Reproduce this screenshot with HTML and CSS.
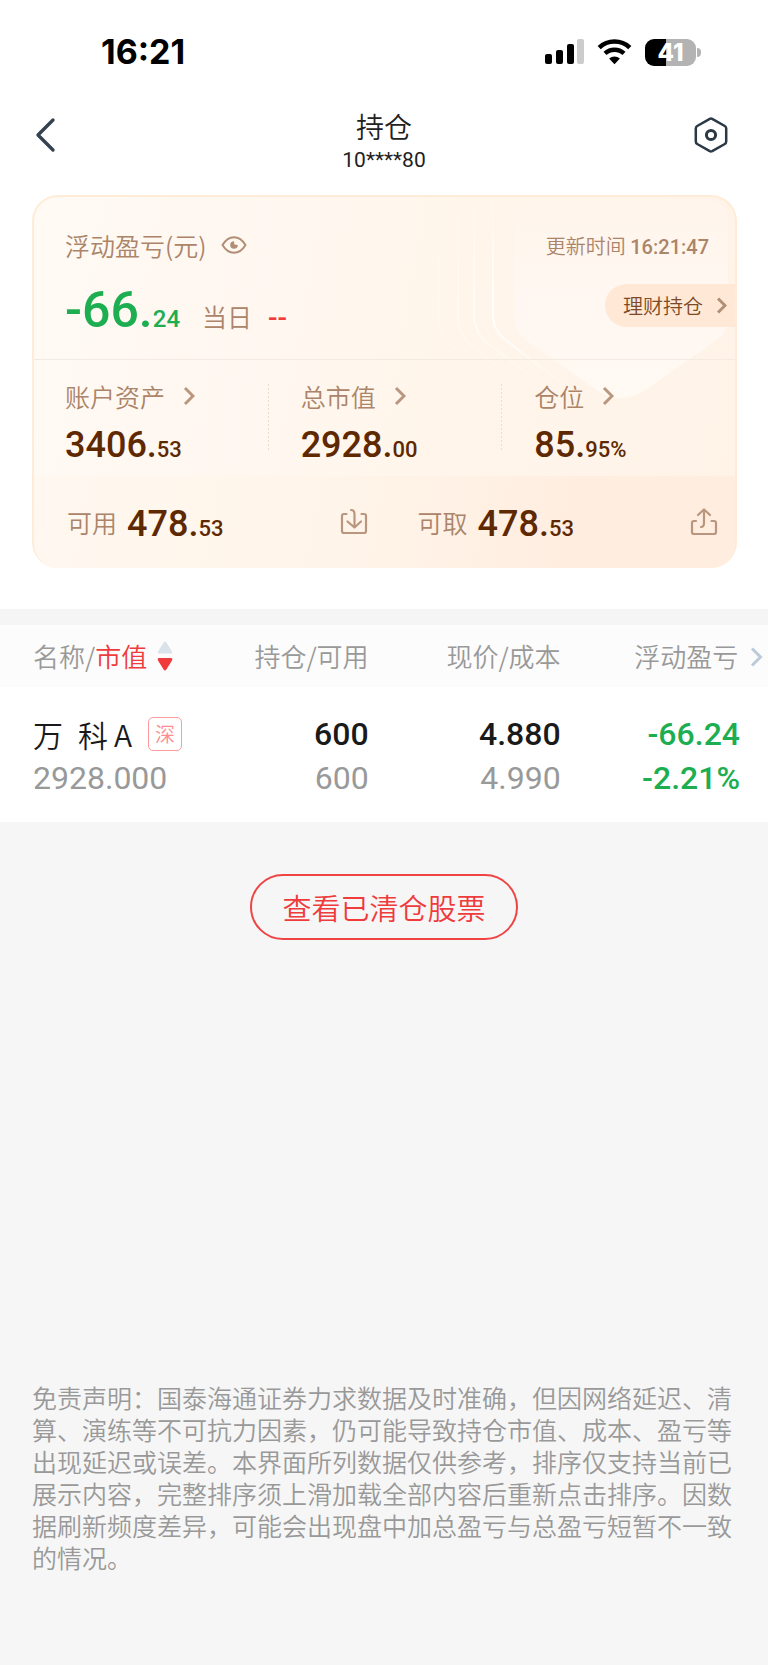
FILE: index.html
```html
<!DOCTYPE html>
<html lang="zh-CN">
<head>
  <meta charset="UTF-8">
  <meta name="viewport" content="width=device-width, initial-scale=1.0">
  <title>持仓</title>
  <link rel="stylesheet" href="styles.css">
</head>
<body>
  <div class="top">
    <div class="status-bar">
      <span class="clock">16:21</span>
      <div class="status-icons">
        <svg width="40" height="26" viewBox="0 0 40 26">
          <rect x="0" y="15" width="7" height="10" rx="2"/>
          <rect x="11" y="11" width="7" height="14" rx="2"/>
          <rect x="22" y="5" width="7" height="20" rx="2"/>
          <rect x="32" y="0" width="7" height="25" rx="2" fill="#ccc"/>
        </svg>
        <svg width="36" height="26" viewBox="0 0 36 26">
          <path d="M2.2 8.6a22.4 22.4 0 0 1 30.6 0" fill="none" stroke="#000" stroke-width="4.6"/>
          <path d="M8 14.4a14 14 0 0 1 19 0" fill="none" stroke="#000" stroke-width="4.4"/>
          <path d="M17.5 25.2l-5.4-5.6a8 8 0 0 1 10.8 0z"/>
        </svg>
        <div class="battery"><span>41</span></div>
      </div>
    </div>

    <header class="nav">
      <button class="icon-btn" aria-label="返回">
        <svg width="36" height="36" viewBox="0 0 36 36" fill="none" stroke="#35424f" stroke-width="3.4" stroke-linecap="round" stroke-linejoin="round"><path d="M21 3L6 18l15 15"/></svg>
      </button>
      <div class="nav-title">
        <h1>持仓</h1>
        <p>10****80</p>
      </div>
      <button class="icon-btn" aria-label="设置">
        <svg width="36" height="36" viewBox="0 0 36 36" fill="none" stroke="#2b3947" stroke-width="2.5" stroke-linejoin="round"><path d="M16.8 1.8q1.2-.6 2.4 0l12.6 7.2q1.4.8 1.4 2.4v13.2q0 1.6-1.4 2.4l-12.6 7.2q-1.2.6-2.4 0l-12.6-7.2q-1.4-.8-1.4-2.4v-13.2q0-1.6 1.4-2.4z"/><circle cx="18" cy="18" r="4.6" stroke-width="3"/></svg>
      </button>
    </header>

    <section class="card">
      <svg class="card-bg" width="320" height="210" viewBox="0 0 320 210" fill="none">
        <defs>
          <linearGradient id="shield" x1="0" y1="0" x2="0" y2="1">
            <stop offset="0" stop-color="#fff5ec"/>
            <stop offset="0.5" stop-color="#fff7f1"/>
            <stop offset="1" stop-color="#fffaf3"/>
          </linearGradient>
          <linearGradient id="line" x1="0" y1="0" x2="0" y2="200" gradientUnits="userSpaceOnUse">
            <stop offset="0" stop-color="#fff" stop-opacity="0.1"/>
            <stop offset="0.6" stop-color="#fff"/>
            <stop offset="1" stop-color="#fff" stop-opacity="0"/>
          </linearGradient>
        </defs>
        <path fill="url(#shield)" d="M99 24Q99 4 119 2H293Q313 4 313 24V122Q313 134 303 142L232 192Q206 210 180 192L109 142Q99 134 99 122z"/>
        <g stroke="url(#line)" stroke-width="2">
          <path d="M78 0V118Q78 132 89 142L160 196"/>
          <path d="M59 0V118Q59 134 70 144L140 198" opacity="0.7"/>
          <path d="M43 0V120Q43 136 54 146L120 200" opacity="0.45"/>
          <path d="M24 0V122Q24 138 36 148L100 200" opacity="0.3"/>
        </g>
      </svg>

      <div class="profit">
        <div class="profit-head">
          <span class="label">浮动盈亏(元)</span>
          <button class="eye" aria-label="隐藏金额">
            <svg width="26" height="20" viewBox="0 0 26 20" fill="none" stroke="#b18e75" stroke-width="2"><path d="M1.5 10C4.5 5 8.5 2.2 13 2.2S21.5 5 24.5 10C21.5 15 17.5 17.8 13 17.8S4.5 15 1.5 10z" stroke-linejoin="round"/><path d="M13 6.2l.4 3.4 3.4.4a3.8 3.8 0 1 1-3.8-3.8z" fill="#b18e75" stroke="none"/></svg>
          </button>
          <span class="update">更新时间 <b>16:21:47</b></span>
        </div>
        <div class="profit-body">
          <span class="profit-num">-66.<small>24</small></span>
          <span class="label">当日</span>
          <span class="dash">--</span>
          <a class="wealth" href="#">理财持仓
            <svg width="10" height="17" viewBox="0 0 10 17" fill="none" stroke="#b18e75" stroke-width="3"><path d="M1 1.5l7 7-7 7"/></svg>
          </a>
        </div>
      </div>

      <div class="stats">
        <a class="stat" href="#">
          <span class="label">账户资产
            <svg class="arrow" viewBox="0 0 12 20"><path d="M2 2l8 8-8 8"/></svg>
          </span>
          <span class="num">3406.<small>53</small></span>
        </a>
        <a class="stat" href="#">
          <span class="label">总市值
            <svg class="arrow" viewBox="0 0 12 20"><path d="M2 2l8 8-8 8"/></svg>
          </span>
          <span class="num">2928.<small>00</small></span>
        </a>
        <a class="stat" href="#">
          <span class="label">仓位
            <svg class="arrow" viewBox="0 0 12 20"><path d="M2 2l8 8-8 8"/></svg>
          </span>
          <span class="num">85.<small>95%</small></span>
        </a>
      </div>

      <div class="funds">
        <div class="fund">
          <span class="label">可用</span>
          <span class="num">478.<small>53</small></span>
          <button class="fund-btn" aria-label="转入">
            <svg width="28" height="28" viewBox="0 0 28 28" fill="none" stroke="#b9967d" stroke-width="2.2" stroke-linecap="round" stroke-linejoin="round"><path d="M6.5 6H4Q2 6 2 8v15q0 2 2 2h20q2 0 2-2V8q0-2-2-2h-2.5M11 2q3.5 0 3.5 4v13M7.5 13.5l7 6 6.5-6"/></svg>
          </button>
        </div>
        <div class="fund">
          <span class="label">可取</span>
          <span class="num">478.<small>53</small></span>
          <button class="fund-btn" aria-label="转出">
            <svg width="28" height="28" viewBox="0 0 28 28" fill="none" stroke="#b9967d" stroke-width="2.2" stroke-linecap="round" stroke-linejoin="round"><path d="M6 13H4q-2 0-2 2v9q0 2 2 2h20q2 0 2-2v-9q0-2-2-2h-2.5M8 7l6-5.5L20 7M14 2v13q0 4-3 4"/></svg>
          </button>
        </div>
      </div>
    </section>
  </div>

  <table class="holdings">
    <thead>
      <tr>
        <th>
          <button class="sort">名称/<em>市值</em>
            <svg width="16" height="30" viewBox="0 0 16 30"><path d="M8 .5q.8 0 1.4 1l5.6 9q1 2-1 2H2q-2 0-1-2l5.6-9q.6-1 1.4-1z" fill="#dae3ea"/><path d="M8 29.5q.8 0 1.4-1l5.600-9q1-2.500-1-2.500H2q-2 0-1 2.500l5.600 9q.6 1 1.400 1z" fill="#ef3b3b"/></svg>
          </button>
        </th>
        <th>持仓/可用</th>
        <th>现价/成本</th>
        <th class="last">浮动盈亏
          <svg class="more" width="13" height="20" viewBox="0 0 13 20"><path d="M2 1.5l8.5 8.5L2 18.5"/></svg>
        </th>
      </tr>
    </thead>
    <tbody>
      <tr>
        <td>
          <div class="stock">万&ensp;科&thinsp;A <span class="tag">深</span></div>
          <div class="sub">2928.000</div>
        </td>
        <td>
          <div class="main">600</div>
          <div class="sub">600</div>
        </td>
        <td>
          <div class="main">4.880</div>
          <div class="sub">4.990</div>
        </td>
        <td class="down">
          <div class="main">-66.24</div>
          <div class="sub">-2.21%</div>
        </td>
      </tr>
    </tbody>
  </table>

  <main class="rest">
    <button class="cleared">查看已清仓股票</button>
    <p class="disclaimer">免责声明：国泰海通证券力求数据及时准确，但因网络延迟、清算、演练等不可抗力因素，仍可能导致持仓市值、成本、盈亏等出现延迟或误差。本界面所列数据仅供参考，排序仅支持当前已展示内容，完整排序须上滑加载全部内容后重新点击排序。因数据刷新频度差异，可能会出现盘中加总盈亏与总盈亏短暂不一致的情况。</p>
  </main>
</body>
</html>
```
FILE: styles.css
```css
* {
  box-sizing: border-box;
}
body {
  margin: 0;
  min-height: 100vh;
  display: flex;
  flex-direction: column;
  background: #f6f6f6;
  font-family: "Noto Sans CJK SC", sans-serif;
  font-weight: 350;
  color: #222;
}
button {
  padding: 0;
  border: none;
  background: none;
  font: inherit;
  color: inherit;
  cursor: pointer;
}
a {
  color: inherit;
  text-decoration: none;
}
svg {
  display: block;
  flex: none;
}
.top {
  background: #fff;
  padding-bottom: 41px;
  border-bottom: 16px solid #f5f5f5;
}

/* status bar */
.status-bar {
  display: flex;
  justify-content: space-between;
  align-items: center;
  height: 104px;
  padding: 0 67px 0 101px;
}
.clock {
  font: 700 34px/40px Inter, sans-serif;
  color: #000;
}
.status-icons {
  display: flex;
  align-items: center;
  gap: 12px;
}
.battery {
  position: relative;
  width: 51px;
  height: 27px;
  margin-right: 5px;
  border-radius: 9px;
  background: linear-gradient(90deg, #000 41%, #b3b3b3 41%);
  color: #fff;
  font: 800 24px/27px Inter, sans-serif;
  text-align: center;
}
.battery::after {
  content: "";
  position: absolute;
  left: 52px;
  top: 9px;
  width: 4px;
  height: 9px;
  border-radius: 0 4px 4px 0;
  background: #b3b3b3;
}

/* title */
.nav {
  display: flex;
  justify-content: space-between;
  align-items: center;
  height: 91px;
  padding: 0 39px 29px 32px;
}
.nav-title {
  padding: 11px 0 0 7px;
  text-align: center;
}
.nav h1 {
  margin: 0;
  font-size: 28px;
  font-weight: 350;
  line-height: 38px;
}
.nav p {
  margin: 0;
  font: 400 21px/30px Roboto, sans-serif;
}

/* asset card */
.card {
  position: relative;
  margin: 0 31px 0 32px;
  border: 2px solid #ffecd8;
  border-bottom: none;
  border-radius: 26px;
  overflow: hidden;
  background: linear-gradient(100deg, #fffaf4 0%, #fff7f0 35%, #fff5ea 60%, #fff3e8 100%);
}
.card-bg {
  position: absolute;
  top: 0;
  right: 0;
}
.label {
  font-size: 25px;
  line-height: 36px;
  color: #ab8469;
}
.num,
.profit-num {
  font-family: Roboto, sans-serif;
  font-weight: 500;
  color: #5e2800;
}
.num {
  font-size: 36px;
  line-height: 42px;
}
small {
  font-size: 22px;
}
.profit {
  position: relative;
  height: 163px;
  padding: 30px 0 0 31px;
  border-bottom: 1px solid #f3ebe2;
}
.profit-head {
  display: flex;
  align-items: center;
  padding-right: 26px;
}
.eye {
  margin-left: 14px;
}
.update {
  margin-left: auto;
  font-size: 20px;
  color: #ab8469;
}
.update b {
  font: 500 20px Roboto, sans-serif;
}
.profit-body {
  display: flex;
  align-items: baseline;
  margin-top: 17px;
}
.profit-num {
  margin-right: 22px;
  font-size: 50px;
  line-height: 60px;
  color: #1cae50;
}
.profit-num small {
  font-size: 24px;
}
.dash {
  margin-left: 16px;
  font: 500 28px Roboto, sans-serif;
  color: #ef3b3b;
}
.wealth {
  display: flex;
  align-self: flex-start;
  align-items: center;
  gap: 14px;
  height: 43px;
  margin: 4px 0 0 auto;
  padding: 0 8px 0 18px;
  border-radius: 22px 0 0 22px;
  background: #ffe8d6;
  font-size: 20px;
  color: #7c4a26;
}
.stats {
  position: relative;
  display: grid;
  grid-template-columns: repeat(3, 1fr);
  height: 116px;
  padding: 18px 0 0;
}
.stat {
  display: flex;
  flex-direction: column;
  gap: 10px;
  padding-left: 33px;
}
.stat:first-child {
  padding-left: 31px;
}
.stat + .stat {
  background: repeating-linear-gradient(#ecdccd 0 2px, transparent 2px 4px) 0 6px / 1px 66px no-repeat;
}
.stat .label {
  display: flex;
  align-items: center;
  gap: 18px;
}
.arrow {
  width: 12px;
  height: 20px;
  fill: none;
  stroke: #b9967d;
  stroke-width: 3;
}
.funds {
  position: relative;
  display: grid;
  grid-template-columns: 1fr 1fr;
  height: 92px;
  background: linear-gradient(100deg, #fff8f0 0%, #fff4e9 45%, #ffeddf 80%);
}
.fund {
  display: flex;
  align-items: center;
  padding: 0 17px 0 33px;
}
.fund .num {
  margin-left: 10px;
  padding-top: 8px;
}
.fund-btn {
  margin-left: auto;
}

/* holdings */
.holdings {
  width: 100%;
  border-collapse: collapse;
  table-layout: fixed;
  background: #fff;
  text-align: right;
}
.holdings th {
  height: 62px;
  padding: 0;
  background: #fcfcfc;
  font-size: 26px;
  line-height: 40px;
  font-weight: 350;
  color: #999;
}
.holdings th:first-child,
.holdings td:first-child {
  width: 26%;
  padding-left: 33px;
  text-align: left;
}
.holdings th:nth-child(2) {
  width: 22%;
}
.holdings th:nth-child(3) {
  width: 25%;
}
.holdings .last {
  padding-right: 5px;
}
.holdings td {
  height: 135px;
  padding: 3px 0 0;
}
.sort {
  display: flex;
  align-items: center;
}
.sort em {
  margin-right: 10px;
  font-style: normal;
  color: #ef3b3b;
}
.more {
  display: inline-block;
  margin-left: 6px;
  fill: none;
  stroke: #bccbd9;
  stroke-width: 3;
}
.stock {
  display: flex;
  align-items: center;
  height: 44px;
  font-size: 30px;
  color: #1a1a1a;
  white-space: nowrap;
}
.tag {
  width: 34px;
  height: 34px;
  margin-left: 16px;
  border: 1px solid #ff9a9f;
  border-radius: 5px;
  font-size: 20px;
  line-height: 32px;
  text-align: center;
  color: #ff8a90;
}
.main,
.sub {
  font: 500 32px/44px Roboto, sans-serif;
  color: #1a1a1a;
}
.sub {
  font-weight: 400;
  color: #999;
}
.holdings .down {
  padding-right: 28px;
}
.down .main,
.down .sub {
  font-weight: 500;
  color: #1cae50;
}

/* bottom area */
.rest {
  flex: 1;
  display: flex;
  flex-direction: column;
  justify-content: space-between;
  align-items: center;
  padding: 52px 32px 92px;
}
.cleared {
  height: 66px;
  padding: 0 30px;
  border: 2px solid #ef4444;
  border-radius: 33px;
  font-size: 29px;
  color: #ef3b3b;
}
.disclaimer {
  margin: 0;
  font-size: 25px;
  line-height: 32px;
  color: #999;
}
```
